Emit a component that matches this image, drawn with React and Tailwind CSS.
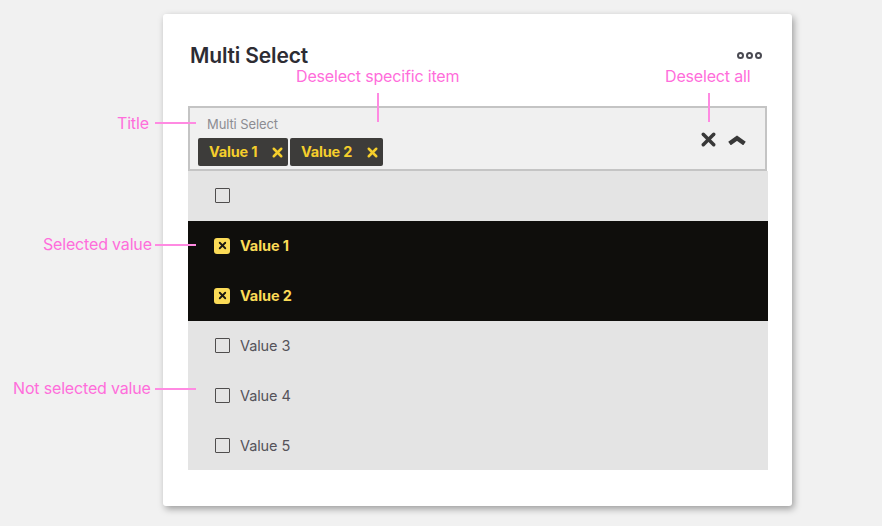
import { X } from 'lucide-react';

const font = "font-['Inter','Noto_Sans',sans-serif]";

function Tag({ label, className }) {
    return (
        <div className={`flex items-center justify-between h-[28px] bg-[#3d3c3a] rounded-[2px] pl-[11px] pr-[3px] ${className}`}>
            <span className="text-[14.5px] font-bold tracking-[-0.2px] text-[#f5ce2c]">{label}</span>
            <X className="w-[15px] h-[15px] text-[#f5ce2c]" strokeWidth={4} />
        </div>
    );
}

function Row({ label, selected }) {
    return (
        <div className={`flex items-center h-[49.9px] pl-[26px] ${selected ? 'bg-[#0f0e0c]' : ''}`}>
            {selected ? (
                <div className="flex items-center justify-center w-[16px] h-[16px] rounded-[3px] bg-[#fbdb57]">
                    <X className="w-[11px] h-[11px] text-[#1a1813]" strokeWidth={4} />
                </div>
            ) : (
                <div className="w-[15px] h-[15px] border-[1.5px] border-[#4f4d4d] rounded-[1px] ml-px" />
            )}
            <span className={`text-[14.5px] tracking-[-0.1px] ${selected ? 'ml-[10px] font-bold text-[#fbdb57]' : 'ml-[10px] text-[#55535a]'}`}>{label}</span>
        </div>
    );
}

function Note({ className, children }) {
    return <span className={`absolute text-[16px] leading-[20px] tracking-[-0.17px] text-[#ff6ddb] whitespace-nowrap ${className}`}>{children}</span>;
}

function Line({ className }) {
    return <div className={`absolute bg-[#ff8ae2] ${className}`} />;
}

function Chevron() {
    return (
        <svg viewBox="0 0 18 10" className="w-[18px] h-[10px] text-[#383838]" fill="none" stroke="currentColor" strokeWidth="4.4">
            <path d="M1.5 8.5 L9 3.2 L16.5 8.5" />
        </svg>
    );
}

export default function App() {
    return (
        <div className={`relative h-[526px] overflow-hidden bg-[#f1f1f1] pl-[163px] pt-[14px] ${font}`}>
            {/* Card */}
            <div className="w-[629px] h-[492px] bg-white rounded-[3px] shadow-[2px_3px_7px_rgba(0,0,0,0.35)] pl-[25px] pr-[24px] pt-[29px]">
                <div className="flex items-center justify-between h-[26px] pl-[2px] pr-[6px]">
                    <h1 className="text-[21px] font-semibold tracking-[-0.15px] text-[#2d2c33]">Multi Select</h1>
                    <div className="flex gap-[2px] -mt-[2px]">
                        <span className="w-[7px] h-[7px] rounded-full border-2 border-[#4a4a52]" />
                        <span className="w-[7px] h-[7px] rounded-full border-2 border-[#4a4a52]" />
                        <span className="w-[7px] h-[7px] rounded-full border-2 border-[#4a4a52]" />
                    </div>
                </div>

                {/* Field */}
                <div className="flex items-end justify-between h-[65px] mt-[37px] mr-[1px] bg-[#f0f0f0] border-2 border-[#c4c4c4] pl-[8px] pr-[19px] pb-[3px]">
                    <div>
                        <div className="pl-[9px] mb-[6px] text-[13px] leading-[16px] tracking-[-0.1px] text-[#8c8c92]">Multi Select</div>
                        <div className="flex gap-[2px]">
                            <Tag label="Value 1" className="w-[90px]" />
                            <Tag label="Value 2" className="w-[93px]" />
                        </div>
                    </div>
                    <div className="flex items-center gap-[9px] mb-[16px]">
                        <X className="w-[21px] h-[21px] text-[#383838]" strokeWidth={4} />
                        <Chevron />
                    </div>
                </div>

                {/* Options */}
                <div className="bg-[#e4e4e4]">
                    <Row label="" />
                    <Row label="Value 1" selected />
                    <Row label="Value 2" selected />
                    <Row label="Value 3" />
                    <Row label="Value 4" />
                    <Row label="Value 5" />
                </div>
            </div>

            {/* Annotations */}
            <Note className="left-[296px] top-[66px]">Deselect specific item</Note>
            <Line className="left-[377px] top-[93px] w-[1.5px] h-[29px]" />
            <Note className="left-[665px] top-[66px]">Deselect all</Note>
            <Line className="left-[708px] top-[93px] w-[1.5px] h-[29px]" />
            <Note className="left-[117px] top-[113px]">Title</Note>
            <Line className="left-[155px] top-[122px] w-[41px] h-[1.5px]" />
            <Note className="left-[43px] top-[234px]">Selected value</Note>
            <Line className="left-[155px] top-[244px] w-[41px] h-[1.5px]" />
            <Note className="left-[13px] top-[378px]">Not selected value</Note>
            <Line className="left-[155px] top-[388px] w-[41px] h-[1.5px]" />
        </div>
    );
}
